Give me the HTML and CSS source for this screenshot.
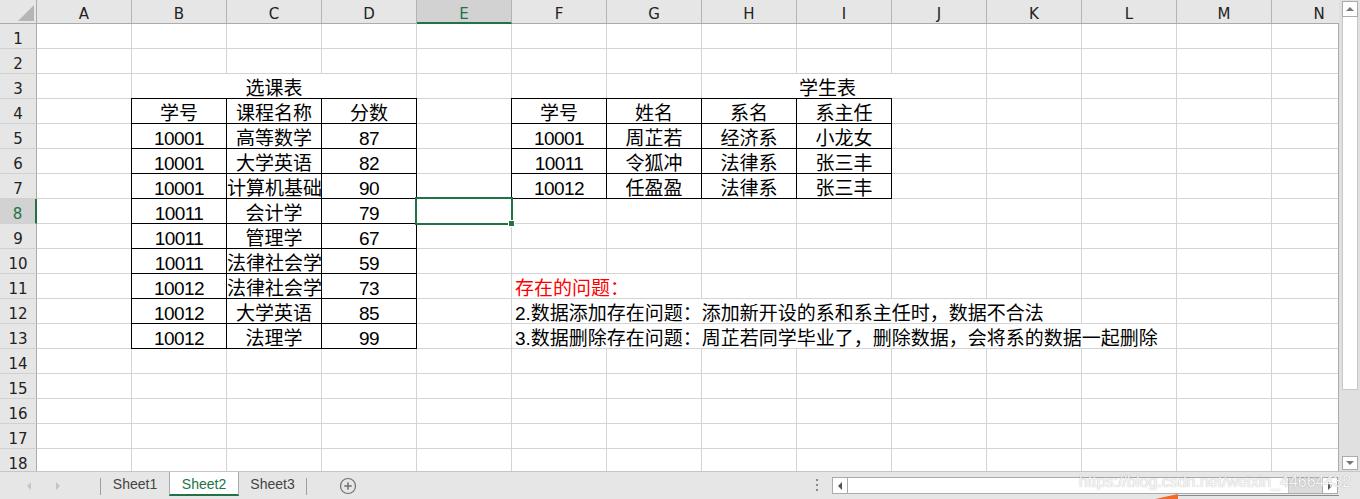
FILE: index.html
```html
<!DOCTYPE html>
<html lang="zh-CN">
<head>
<meta charset="utf-8">
<title>Sheet2</title>
<link rel="stylesheet" href="styles.css">
</head>
<body>
<div class="app">
  <div class="main">
    <div class="sheet">
      <div class="colhead">
        <div class="corner"><span class="corner-tri"></span></div>
        <div class="ch">A</div>
        <div class="ch">B</div>
        <div class="ch">C</div>
        <div class="ch">D</div>
        <div class="ch sel">E</div>
        <div class="ch">F</div>
        <div class="ch">G</div>
        <div class="ch">H</div>
        <div class="ch">I</div>
        <div class="ch">J</div>
        <div class="ch">K</div>
        <div class="ch">L</div>
        <div class="ch">M</div>
        <div class="ch">N</div>
      </div>
      <div class="body">
        <div class="rowhead">
          <div class="rh">1</div>
          <div class="rh">2</div>
          <div class="rh">3</div>
          <div class="rh">4</div>
          <div class="rh">5</div>
          <div class="rh">6</div>
          <div class="rh">7</div>
          <div class="rh sel">8</div>
          <div class="rh">9</div>
          <div class="rh">10</div>
          <div class="rh">11</div>
          <div class="rh">12</div>
          <div class="rh">13</div>
          <div class="rh">14</div>
          <div class="rh">15</div>
          <div class="rh">16</div>
          <div class="rh">17</div>
          <div class="rh last">18</div>
        </div>
        <div class="cells">
          <div class="title t1">选课表</div>
          <div class="tbl tbl1">
            <div>学号</div><div>课程名称</div><div>分数</div>
            <div class="num">10001</div><div>高等数学</div><div class="num">87</div>
            <div class="num">10001</div><div>大学英语</div><div class="num">82</div>
            <div class="num">10001</div><div>计算机基础</div><div class="num">90</div>
            <div class="num">10011</div><div>会计学</div><div class="num">79</div>
            <div class="num">10011</div><div>管理学</div><div class="num">67</div>
            <div class="num">10011</div><div>法律社会学</div><div class="num">59</div>
            <div class="num">10012</div><div>法律社会学</div><div class="num">73</div>
            <div class="num">10012</div><div>大学英语</div><div class="num">85</div>
            <div class="num">10012</div><div>法理学</div><div class="num">99</div>
          </div>
          <div class="title t2">学生表</div>
          <div class="tbl tbl2">
            <div>学号</div><div>姓名</div><div>系名</div><div>系主任</div>
            <div class="num">10001</div><div>周芷若</div><div>经济系</div><div>小龙女</div>
            <div class="num">10011</div><div>令狐冲</div><div>法律系</div><div>张三丰</div>
            <div class="num">10012</div><div>任盈盈</div><div>法律系</div><div>张三丰</div>
          </div>
          <div class="note n1">存在的问题：</div>
          <div class="note n2">2.数据添加存在问题：添加新开设的系和系主任时，数据不合法</div>
          <div class="note n3">3.数据删除存在问题：周芷若同学毕业了，删除数据，会将系的数据一起删除</div>
          <div class="selbox"></div>
        </div>
      </div>
    </div>
    <div class="vscroll">
      <div class="sbtn up"><span class="tri-up"></span></div>
      <div class="vthumb"></div>
      <div class="vtrack"></div>
      <div class="sbtn down"><span class="tri-down"></span></div>
    </div>
  </div>
  <div class="tabbar">
    <div class="nav"><span class="arr l"></span><span class="arr r"></span></div>
    <span class="sep"></span>
    <div class="tab">Sheet1</div>
    <div class="tab active">Sheet2</div>
    <div class="tab t3">Sheet3</div>
    <span class="sep"></span>
    <div class="add">
      <svg width="18" height="18" viewBox="0 0 18 18"><circle cx="9" cy="9" r="7.5" fill="none" stroke="#707070" stroke-width="1.2"/><path d="M9 5.2v7.6M5.2 9h7.6" stroke="#707070" stroke-width="1.5"/></svg>
    </div>
    <div class="spacer"></div>
    <div class="grip">
      <svg width="4" height="14" viewBox="0 0 4 14"><rect x="1" y="1" width="2" height="2" fill="#8a8a8a"/><rect x="1" y="6" width="2" height="2" fill="#8a8a8a"/><rect x="1" y="11" width="2" height="2" fill="#8a8a8a"/></svg>
    </div>
    <div class="hscroll">
      <div class="hbtn left"><span class="tri-left"></span></div>
      <div class="hthumb"></div>
      <div class="htrack"></div>
      <div class="hbtn right"><span class="tri-right"></span></div>
    </div>
    <div class="tailpad"></div>
  </div>
  <div class="watermark">https://blog.csdn.net/weixin_44664432</div>
  <div class="streak"></div>
  <div class="edge"></div>
</div>
</body>
</html>
```

FILE: styles.css
```css
html, body {
  margin: 0;
  padding: 0;
  background: #fff;
}

body {
  font-family: "Liberation Sans", "Noto Sans CJK SC", sans-serif;
}

.app {
  position: relative;
  width: 1360px;
  height: 499px;
  overflow: hidden;
  display: flex;
  flex-direction: column;
  background: #e6e6e6;
}

.main {
  display: flex;
  height: 471px;
  flex: none;
}

.sheet {
  width: 1339px;
  flex: none;
  overflow: hidden;
  display: flex;
  flex-direction: column;
}

/* column headers */
.colhead {
  display: flex;
  height: 24px;
  flex: none;
  background: #e6e6e6;
}

.corner {
  width: 37px;
  height: 24px;
  flex: none;
  box-sizing: border-box;
  border-right: 1px solid #ababab;
  border-bottom: 1px solid #ababab;
  display: flex;
  justify-content: flex-end;
  align-items: flex-end;
  padding: 0 2px 2px 0;
}

.corner-tri {
  width: 0;
  height: 0;
  border-left: 16px solid transparent;
  border-bottom: 16px solid #b5b5b5;
}

.ch {
  width: 95px;
  height: 24px;
  flex: none;
  box-sizing: border-box;
  border-right: 1px solid #b4b4b4;
  border-bottom: 1px solid #ababab;
  text-align: center;
  font: 15px/28px "DejaVu Sans", sans-serif;
  color: #222;
  overflow: hidden;
}

.ch.sel {
  background: #d2d2d2;
  color: #217346;
  border-bottom: 2px solid #217346;
}

/* body */
.body {
  display: flex;
  flex: 1;
  min-height: 0;
  overflow: hidden;
  border-right: 1px solid #ababab;
}

.rowhead {
  width: 37px;
  flex: none;
  background: #e6e6e6;
}

.rh {
  height: 25px;
  box-sizing: border-box;
  border-right: 1px solid #ababab;
  border-bottom: 1px solid #d0d0d0;
  text-align: center;
  font: 15px/30px "DejaVu Sans", sans-serif;
  color: #222;
  overflow: hidden;
}

.rh.last {
  height: 22px;
  border-bottom: none;
}

.rh.sel {
  background: #d2d2d2;
  color: #217346;
  border-right: 2px solid #217346;
}

.cells {
  flex: none;
  width: 1330px;
  display: grid;
  grid-template-columns: repeat(14, 95px);
  grid-template-rows: repeat(18, 25px);
  background-color: #fff;
  background-image:
    linear-gradient(to left, #d4d4d4 1px, transparent 1px),
    linear-gradient(to top, #d4d4d4 1px, transparent 1px);
  background-size: 95px 100%, 100% 25px;
  font-size: 19px;
  color: #000;
}

.title {
  background: #fff;
  box-sizing: border-box;
  border-bottom: 1px solid #d4d4d4;
  line-height: 30px;
  white-space: nowrap;
}

.t1 {
  grid-column: 2 / 5;
  grid-row: 3;
  text-align: center;
  border-right: 1px solid #d4d4d4;
}

.t2 {
  grid-column: 8 / 10;
  grid-row: 3;
  padding-left: 97px;
}

.tbl {
  align-self: start;
  justify-self: start;
  margin: -1px 0 0 -1px;
  display: grid;
  gap: 1px;
  background: #000;
  border: 1px solid #000;
  grid-auto-rows: 24px;
}

.tbl1 {
  grid-column: 2 / 5;
  grid-row: 4 / 14;
  grid-template-columns: repeat(3, 94px);
}

.tbl2 {
  grid-column: 6 / 10;
  grid-row: 4 / 8;
  grid-template-columns: repeat(4, 94px);
}

.tbl > div {
  background: #fff;
  text-align: center;
  line-height: 30px;
  white-space: nowrap;
  min-width: 0;
}

.tbl > .num {
  letter-spacing: -0.6px;
}

.note {
  background: #fff;
  box-sizing: border-box;
  border-right: 1px solid #d4d4d4;
  border-bottom: 1px solid #d4d4d4;
  padding-left: 3px;
  line-height: 30px;
  white-space: nowrap;
}

.n1 {
  grid-column: 6 / 8;
  grid-row: 11;
  color: #ff0000;
}

.n2 {
  grid-column: 6 / 12;
  grid-row: 12;
}

.n3 {
  grid-column: 6 / 13;
  grid-row: 13;
}

.selbox {
  grid-column: 5;
  grid-row: 8;
  margin: -2px -1px -1px -2px;
  border: 2px solid #217346;
  position: relative;
  z-index: 2;
}

.selbox::after {
  content: "";
  position: absolute;
  right: -4px;
  bottom: -4px;
  width: 5px;
  height: 5px;
  background: #217346;
  border: 1px solid #fff;
}

/* vertical scrollbar */
.vscroll {
  width: 21px;
  flex: none;
  box-sizing: border-box;
  padding: 1px 2px 1px 3px;
  background: #e0e0e0;
  display: flex;
  flex-direction: column;
}

.sbtn {
  height: 16px;
  flex: none;
  box-sizing: border-box;
  background: #fff;
  border: 1px solid #ababab;
  display: flex;
  align-items: center;
  justify-content: center;
}

.sbtn.down {
  height: 14px;
}

.tri-up {
  width: 0;
  height: 0;
  border-left: 4px solid transparent;
  border-right: 4px solid transparent;
  border-bottom: 4px solid #777;
}

.tri-down {
  width: 0;
  height: 0;
  border-left: 4px solid transparent;
  border-right: 4px solid transparent;
  border-top: 4px solid #777;
}

.vthumb {
  height: 373px;
  flex: none;
  box-sizing: border-box;
  background: #fff;
  border: 1px solid #c8c8c8;
  border-top: none;
}

.vtrack {
  flex: 1;
}

/* tab bar */
.tabbar {
  height: 28px;
  flex: none;
  box-sizing: border-box;
  border-top: 1px solid #c6c6c6;
  background: #e6e6e6;
  display: flex;
  align-items: flex-start;
  font: 14px "Liberation Sans", sans-serif;
  color: #444;
}

.nav {
  width: 100px;
  height: 27px;
  flex: none;
  display: flex;
  align-items: center;
}

.arr {
  width: 0;
  height: 0;
  border-top: 4px solid transparent;
  border-bottom: 4px solid transparent;
}

.arr.l {
  border-right: 4px solid #c4c4c4;
  margin-left: 27px;
}

.arr.r {
  border-left: 4px solid #c4c4c4;
  margin-left: 25px;
}

.sep {
  width: 1px;
  height: 17px;
  flex: none;
  margin-top: 6px;
  background: #9e9e9e;
}

.tab {
  width: 68px;
  height: 24px;
  flex: none;
  box-sizing: border-box;
  padding-top: 1px;
  line-height: 22px;
  text-align: center;
}

.tab.active {
  width: 70px;
  background: #fff;
  color: #217346;
  border-left: 1px solid #ababab;
  border-right: 1px solid #ababab;
  border-bottom: 2px solid #217346;
}

.tab.t3 {
  width: 67px;
}

.add {
  flex: none;
  margin: 5px 0 0 32px;
  height: 18px;
}

.add svg,
.grip svg {
  display: block;
}

.spacer {
  flex: 1;
}

.grip {
  width: 30px;
  flex: none;
  margin-top: 6px;
  display: flex;
  justify-content: center;
}

.hscroll {
  width: 506px;
  height: 17px;
  flex: none;
  margin-top: 5px;
  box-sizing: border-box;
  border: 1px solid #ababab;
  background: #dcdcdc;
  display: flex;
}

.hbtn {
  width: 14px;
  flex: none;
  background: #fff;
  display: flex;
  align-items: center;
  justify-content: center;
}

.hbtn.left {
  border-right: 1px solid #ababab;
}

.hbtn.right {
  border-left: 1px solid #ababab;
}

.tri-left {
  width: 0;
  height: 0;
  border-top: 4px solid transparent;
  border-bottom: 4px solid transparent;
  border-right: 4px solid #555;
}

.tri-right {
  width: 0;
  height: 0;
  border-top: 4px solid transparent;
  border-bottom: 4px solid transparent;
  border-left: 4px solid #555;
}

.hthumb {
  width: 441px;
  flex: none;
  box-sizing: border-box;
  background: #fff;
  border-right: 1px solid #c6c6c6;
}

.htrack {
  flex: 1;
}

.tailpad {
  width: 22px;
  flex: none;
}

/* overlays from the screenshot */
.watermark {
  position: absolute;
  left: 1079px;
  top: 472px;
  font: 16px/20px "Liberation Sans", sans-serif;
  color: rgba(255, 255, 255, 0.92);
  text-shadow: 0 0 1px rgba(80, 80, 80, 0.55);
  white-space: nowrap;
}

.streak {
  position: absolute;
  left: 1155px;
  top: 494px;
  width: 23px;
  height: 5px;
  background: #f26a2a;
  clip-path: polygon(0 100%, 100% 0, 100% 100%);
}

.edge {
  position: absolute;
  left: 1177px;
  top: 495px;
  width: 162px;
  height: 1px;
  background: #8c8c8c;
}
```
